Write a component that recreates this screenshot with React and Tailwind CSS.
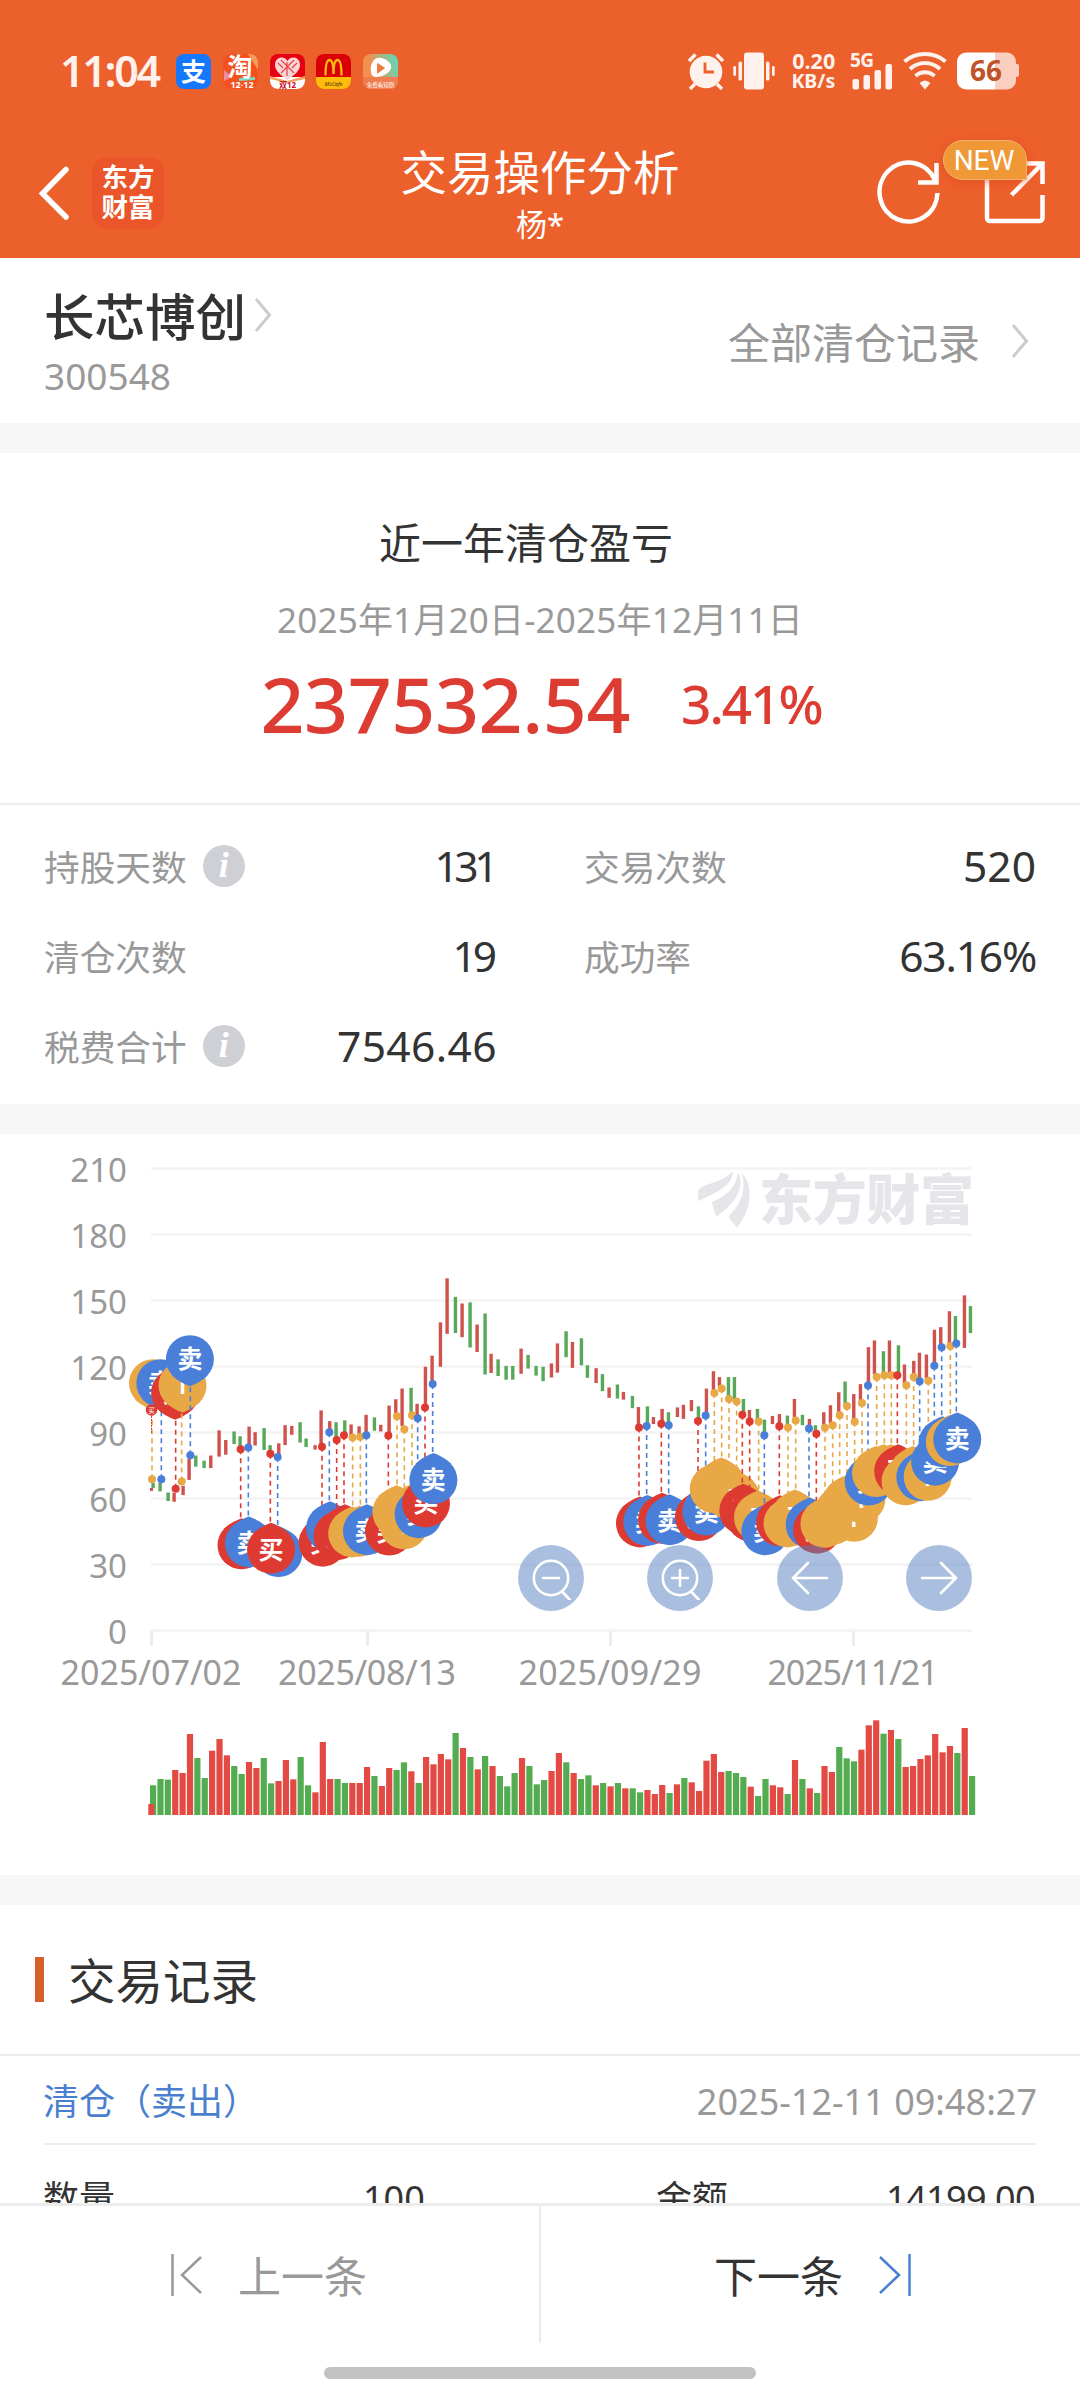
import { useMemo } from "react";

const RED = "#dd3a31";
const BLUE = "#4a7fd9";
const ORANGE = "#e8a845";
const MARK_COLORS = { b: RED, s: BLUE, t: ORANGE };
const MARK_LABELS = { b: "买", s: "卖", t: "T" };

// chart source units -> svg pixels
const toX = (value) => 40 + value / 3;
const toY = (value) => value / 2.7034 - 4;
const slotX = (index) => toX(339 + 22.135 * index);

// [center, color, high, low]
const prices = [
  [339, "g", 954, 968], [360, "g", 954, 977], [384, "g", 980, 1003], [402, "r", 981, 1005],
  [429, "r", 962, 987], [447, "r", 889, 946], [467, "g", 880, 910], [492, "g", 894, 914],
  [512, "r", 880, 914], [537, "r", 812, 883], [557, "r", 838, 878], [582, "g", 815, 849],
  [600, "g", 828, 860], [627, "r", 802, 855], [645, "r", 817, 853], [672, "g", 806, 865],
  [690, "g", 852, 875], [716, "r", 847, 880], [735, "r", 798, 852], [755, "r", 800, 824],
  [780, "g", 790, 845], [798, "g", 834, 857], [825, "r", 852, 864], [843, "r", 758, 852],
  [869, "r", 787, 812], [888, "g", 790, 832], [914, "g", 785, 820], [933, "r", 796, 828],
  [957, "r", 801, 826], [978, "r", 770, 822], [1003, "g", 777, 813], [1022, "r", 797, 815],
  [1047, "r", 745, 824], [1067, "r", 728, 770], [1086, "r", 699, 800], [1113, "g", 697, 765],
  [1131, "r", 740, 775], [1156, "r", 640, 748], [1176, "r", 610, 685], [1201, "r", 520, 640],
  [1221, "r", 401, 551], [1246, "g", 451, 549], [1266, "r", 469, 560], [1290, "g", 466, 588],
  [1311, "r", 526, 600], [1335, "g", 496, 661], [1353, "r", 605, 657], [1374, "g", 620, 665],
  [1398, "g", 638, 675], [1418, "g", 638, 675], [1443, "r", 591, 659], [1464, "g", 608, 645],
  [1488, "g", 638, 664], [1509, "g", 640, 679], [1534, "r", 631, 669], [1552, "r", 577, 656],
  [1578, "g", 544, 614], [1597, "r", 573, 643], [1624, "g", 563, 636], [1642, "g", 636, 670],
  [1668, "r", 644, 684], [1687, "g", 660, 706], [1707, "r", 696, 724], [1732, "g", 688, 726],
  [1750, "r", 708, 729], [1777, "g", 719, 752], [1795, "r", 749, 800], [1822, "g", 747, 795],
  [1840, "r", 776, 795], [1866, "r", 754, 790], [1885, "g", 763, 795], [1912, "r", 750, 776],
  [1930, "r", 743, 781], [1954, "r", 730, 760], [1975, "g", 747, 782], [1999, "r", 699, 768],
  [2020, "r", 652, 706], [2038, "r", 668, 692], [2065, "g", 668, 720], [2083, "g", 668, 728],
  [2110, "g", 727, 765], [2128, "r", 757, 783], [2152, "g", 754, 783], [2173, "g", 783, 818],
  [2197, "r", 773, 795], [2218, "r", 768, 797], [2242, "g", 772, 800], [2263, "r", 727, 778],
  [2287, "g", 770, 798], [2308, "r", 781, 800], [2326, "g", 798, 815], [2351, "r", 763, 800],
  [2371, "r", 744, 793], [2396, "r", 709, 765], [2415, "g", 680, 740], [2441, "r", 714, 783],
  [2461, "r", 687, 733], [2485, "r", 587, 683], [2503, "r", 569, 660], [2530, "g", 598, 657],
  [2548, "r", 569, 657], [2575, "g", 582, 657], [2593, "r", 634, 685], [2621, "r", 624, 662],
  [2638, "r", 602, 673], [2659, "r", 607, 672], [2683, "r", 540, 632], [2702, "r", 533, 580],
  [2728, "r", 490, 578], [2746, "g", 503, 570], [2773, "r", 447, 589], [2791, "g", 476, 549],
];

const volumes = [
  ["g", 286], ["g", 267], ["g", 269], ["r", 240], ["r", 249], ["r", 132], ["g", 204], ["g", 264],
  ["r", 182], ["r", 147], ["r", 196], ["g", 228], ["g", 252], ["r", 216], ["r", 234], ["g", 204],
  ["g", 280], ["r", 273], ["r", 210], ["r", 268], ["g", 201], ["g", 286], ["r", 307], ["r", 156],
  ["r", 267], ["g", 267], ["g", 279], ["r", 279], ["r", 279], ["r", 231], ["g", 258], ["r", 288],
  ["r", 234], ["g", 240], ["g", 217], ["r", 244], ["g", 279], ["r", 201], ["r", 223], ["r", 192],
  ["r", 208], ["g", 129], ["r", 174], ["g", 201], ["r", 238], ["g", 198], ["r", 228], ["g", 258],
  ["g", 289], ["g", 249], ["r", 204], ["g", 228], ["g", 283], ["g", 270], ["r", 243], ["r", 189],
  ["g", 217], ["r", 249], ["g", 267], ["g", 256], ["r", 286], ["g", 279], ["r", 289], ["g", 279],
  ["r", 295], ["g", 295], ["g", 307], ["r", 300], ["r", 312], ["r", 285], ["g", 309], ["r", 283],
  ["g", 264], ["r", 277], ["r", 303], ["r", 212], ["r", 192], ["r", 246], ["g", 243], ["g", 249],
  ["g", 261], ["r", 290], ["g", 318], ["g", 267], ["r", 286], ["r", 292], ["g", 312], ["r", 210],
  ["g", 267], ["r", 295], ["g", 309], ["r", 228], ["r", 246], ["g", 171], ["g", 205], ["g", 214],
  ["r", 179], ["r", 106], ["r", 91], ["g", 131], ["r", 120], ["g", 147], ["r", 231], ["r", 228],
  ["r", 207], ["r", 196], ["r", 132], ["r", 187], ["r", 168], ["g", 189], ["r", 114], ["g", 258],
];

// [x, y, kind], painted in this order
const trades = [
  [336, 944, "t"], [364, 944, "s"], [407, 970, "b"], [425, 950, "t"], [451, 879, "s"],
  [602, 863, "b"], [625, 858, "s"], [713, 884, "s"], [691, 875, "b"],
  [846, 856, "b"], [868, 817, "s"], [890, 838, "b"], [912, 825, "b"], [938, 831, "t"],
  [961, 829, "t"], [979, 825, "s"], [1045, 826, "b"], [1071, 774, "t"], [1093, 809, "t"],
  [1116, 771, "t"], [1133, 779, "s"], [1155, 750, "b"], [1178, 687, "s"],
  [1797, 804, "b"], [1820, 800, "s"], [1864, 794, "b"], [1886, 798, "s"], [1974, 787, "b"],
  [1997, 772, "s"], [2023, 711, "t"], [2045, 699, "t"], [2067, 727, "t"], [2090, 734, "t"],
  [2107, 770, "b"], [2129, 788, "b"], [2156, 788, "t"], [2173, 825, "s"], [2218, 801, "b"],
  [2244, 804, "t"], [2267, 785, "t"], [2307, 807, "s"], [2329, 821, "b"], [2355, 805, "t"],
  [2378, 798, "t"], [2399, 771, "t"], [2421, 746, "t"], [2444, 789, "t"], [2466, 738, "t"],
  [2484, 691, "s"], [2510, 668, "t"], [2533, 663, "t"], [2554, 663, "t"], [2572, 663, "b"],
  [2599, 690, "t"], [2621, 668, "t"], [2639, 679, "s"], [2665, 678, "t"], [2683, 637, "s"],
  [2705, 587, "s"], [2731, 584, "t"], [2749, 577, "s"],
];

const dateTicks = [
  { x: 151, label: "2025/07/02", width: 181 },
  { x: 367, label: "2025/08/13", width: 178 },
  { x: 610, label: "2025/09/29", width: 183 },
  { x: 853, label: "2025/11/21", width: 171 },
];

function TradePin({ trade }) {
  const [x, y, kind] = trade;
  const color = MARK_COLORS[kind];
  const dir = x < 460 ? -1 : 1;
  const cx = slotX(Math.round((x - 339) / 22.135));
  const dotX = toX(x);
  const dotY = toY(y);
  const tipY = dotY + dir * 69;
  const cy = tipY + dir * 27;
  const baseY = cy - dir * 16;
  const bendY = cy - dir * 23.5;

  return (
    <g>
      <circle cx={cx} cy={cy} r="24" fill={color} />
      <path
        d={`M${cx - 18} ${baseY}Q${cx - 10} ${bendY} ${cx} ${tipY}Q${cx + 10} ${bendY} ${cx + 18} ${baseY}z`}
        fill={color}
      />
      <text x={cx} y={cy + 9} fontSize="25" fontWeight="600" textAnchor="middle" fill="#fff">
        {MARK_LABELS[kind]}
      </text>
      <line x1={dotX} y1={dotY} x2={dotX} y2={tipY} stroke={color} strokeWidth="1.6" strokeDasharray="5 4" />
    </g>
  );
}

function Watermark() {
  return (
    <g fill="#e6e5ea">
      <path d="M698 58C700 49 722 50 733 37C733 49 722 57 698 67z" />
      <path d="M712 68C727 62 737 52 738 38C746 56 733 71 716 83C715 77 713 74 712 68z" />
      <path d="M742 39C753 52 753 73 737 94C734 89 729 86 729 82C742 69 746 56 742 39z" />
      <text x="759" y="86" fontSize="54" fontWeight="900" textLength="215">
        东方财富
      </text>
    </g>
  );
}

function ChartButton({ children, label }) {
  return (
    <button
      type="button"
      aria-label={label}
      className="flex h-[66px] w-[66px] items-center justify-center rounded-full bg-[#557fbf]/50"
    >
      <svg width="44" height="44" viewBox="0 0 44 44" fill="none" stroke="#fff" strokeWidth="2.6" strokeLinecap="round">
        {children}
      </svg>
    </button>
  );
}

function TradeChart() {
  const sortedDots = useMemo(() => [...trades].sort((a, b) => a[0] - b[0]), []);

  return (
    <section className="relative h-[741px] bg-white">
      <svg width="1080" height="741" viewBox="0 0 1080 741" className="block">
        {[210, 180, 150, 120, 90, 60, 30, 0].map((value, index) => (
          <g key={value}>
            <rect x="151" y={33 + index * 66} width="821" height="3" fill="#f5f5f5" />
            <text x="127" y={47.5 + index * 66} fontSize="33" textAnchor="end" fill="#999">
              {value}
            </text>
          </g>
        ))}
        {dateTicks.map((tick) => (
          <g key={tick.label}>
            <rect x={tick.x - 1} y="497" width="3" height="15" fill="#ececec" />
            <text x={tick.x} y="551" fontSize="34" textLength={tick.width} textAnchor="middle" fill="#999">
              {tick.label}
            </text>
          </g>
        ))}
        <Watermark />

        {prices.map(([x, color, high, low]) => (
          <rect
            key={x}
            x={toX(x) - 1.6}
            y={toY(high)}
            width="3.4"
            height={toY(low) - toY(high)}
            fill={color === "r" ? "#d0524c" : "#58a85a"}
          />
        ))}
        <rect x="150" y="354" width="3" height="3" fill="#d0524c" />

        {trades.map((trade) => (
          <TradePin key={trade[0]} trade={trade} />
        ))}
        {sortedDots.map(([x, y, kind]) => (
          <circle key={x} cx={toX(x)} cy={toY(y)} r="4" fill={MARK_COLORS[kind]} />
        ))}
        <line x1="151.5" y1="282" x2="151.5" y2="300" stroke={RED} strokeDasharray="2 1" />
        <circle cx="151.5" cy="276" r="5.8" fill={RED} />
        <text x="151.5" y="278.5" fontSize="6.5" textAnchor="middle" fill="#fff">
          买
        </text>

        {volumes.map(([color, level], index) => (
          <rect
            key={index}
            x={slotX(index) - 3}
            y={681 - (375 - level) / 3}
            width="6.2"
            height={(375 - level) / 3}
            fill={color === "r" ? "#e34a43" : "#54ac51"}
          />
        ))}
        <rect x="148.3" y="670" width="6" height="11" fill="#e34a43" />
      </svg>

      <div className="absolute top-[411px] left-[518px] flex w-[454px] justify-between">
        <ChartButton label="缩小">
          <circle cx="22" cy="22" r="17.2" />
          <path d="M14 22h16M33.5 36l7.5 8" />
        </ChartButton>
        <ChartButton label="放大">
          <circle cx="22" cy="22" r="17.2" />
          <path d="M14 22h16M22 14v16M33.5 36l7.5 8" />
        </ChartButton>
        <ChartButton label="向左">
          <path d="M39 22H5M20 7L5 22l15 15" />
        </ChartButton>
        <ChartButton label="向右">
          <path d="M5 22h34M24 7l15 15-15 15" />
        </ChartButton>
      </div>
    </section>
  );
}

function AppIcons() {
  return (
    <div className="ml-[16px] flex gap-[11.8px]">
      <svg width="35" height="35" viewBox="0 0 35 35" className="overflow-visible">
        <rect width="35" height="35" rx="8" fill="#1677ff" />
        <text x="17.5" y="26.5" fontSize="25" fontWeight="700" textAnchor="middle" fill="#fff">支</text>
      </svg>
      <svg width="35" height="35" viewBox="0 0 35 35" className="overflow-visible">
        <rect width="35" height="35" rx="8" fill="#f4511e" />
        <path d="M25 0h2a8 8 0 018 8v8z" fill="#f79a5b" />
        <path d="M1 16l8 7-8 4z" fill="#f58ba0" />
        <path d="M16 24l16-1v3l-16 1z" fill="#7fd8c4" />
        <text x="17" y="22" fontSize="25" fontWeight="700" textAnchor="middle" fill="#fff">淘</text>
        <text x="19" y="34" fontSize="9" fontWeight="700" textAnchor="middle" fill="#fff">12·12</text>
      </svg>
      <svg width="35" height="35" viewBox="0 0 35 35" className="overflow-visible">
        <rect width="35" height="35" rx="8" fill="#e60012" />
        <path d="M0 23h35v4a8 8 0 01-8 8H8a8 8 0 01-8-8z" fill="#fff" />
        <path d="M0 22l17 5 18-5v3l-18 4L0 25z" fill="#f5a05a" />
        <path d="M17.5 26C9 20 5 16 5 11C5 3 14 1 17.5 7C21 1 30 3 30 11C30 16 26 20 17.5 26z" fill="#fbd5d3" />
        <path d="M8 9l5 5M27 9l-5 5M11 6l13 13M24 6L11 19M17 8v14" stroke="#e2444a" strokeWidth="1.2" />
        <text x="17.5" y="33.5" fontSize="8" fontWeight="700" textAnchor="middle" fill="#c8102e">双12</text>
      </svg>
      <svg width="35" height="35" viewBox="0 0 35 35" className="overflow-visible">
        <rect width="35" height="35" rx="8" fill="#db0007" />
        <path d="M0 23h35v4a8 8 0 01-8 8H8a8 8 0 01-8-8z" fill="#ffbc0d" />
        <path
          d="M9.5 21.5C9.5 12 10.5 6 13.5 6S17.5 12 17.5 20C17.5 12 18.5 6 21.5 6S25.5 12 25.5 21.5"
          fill="none"
          stroke="#ffbc0d"
          strokeWidth="2.3"
        />
        <text x="17.5" y="31.5" fontSize="5.5" fontStyle="italic" textAnchor="middle" fill="#4a2b12">McCafe</text>
      </svg>
      <svg width="35" height="35" viewBox="0 0 35 35" className="overflow-visible">
        <defs>
          <linearGradient id="player" x1="0" y1="0.3" x2="1" y2="0">
            <stop offset="0.2" stopColor="#f2914f" />
            <stop offset="1" stopColor="#4fe0c4" />
          </linearGradient>
        </defs>
        <rect width="35" height="35" rx="8" fill="url(#player)" />
        <path d="M0 23h35v4a8 8 0 01-8 8H8a8 8 0 01-8-8z" fill="#ef7d4f" />
        <path d="M12 5C18 1 30 8 28 14.500C26 21 12 26 9 21C7 17 7 9 12 5z" fill="#fff" />
        <path d="M14.500 9.500l7 4.500-7 5z" fill="#ee7a3e" stroke="#ee7a3e" strokeLinejoin="round" />
        <text x="17.5" y="33" fontSize="5.5" textAnchor="middle" fill="#fff">免费看短剧</text>
      </svg>
    </div>
  );
}

function StatusBar() {
  return (
    <div className="flex h-[142px] items-center pl-[60px]">
      <span className="w-[100px] pb-[2px] text-[43px] leading-none font-semibold tracking-[-2.3px] whitespace-nowrap text-[#fff1ec]">
        11:04
      </span>
      <AppIcons />
      <svg width="38" height="38" viewBox="0 0 38 38" className="ml-[289px]" stroke="#fff1ec" fill="none">
        <circle cx="19" cy="20" r="16.3" fill="#fff1ec" stroke="none" />
        <path d="M2 9l6.5-6.5M36 9l-6.5-6.5" strokeWidth="3.5" />
        <path d="M3 37l5-5M35 37l-5-5" strokeWidth="3.5" />
        <path d="M18 10.500V20h9" strokeWidth="2.8" stroke="#ec602c" />
      </svg>
      <svg width="42" height="38" viewBox="0 0 42 38" className="ml-[8px]" fill="#fff1ec">
        <rect x="11" y="0.5" width="20" height="37" rx="3" />
        <rect x="5.5" y="9.5" width="3.5" height="19" rx="1.5" />
        <rect x="33" y="9.5" width="3.5" height="19" rx="1.5" />
        <rect x="0.3" y="14" width="2.7" height="10" rx="1.2" />
        <rect x="39" y="14" width="2.7" height="10" rx="1.2" />
      </svg>
      <div className="ml-[12px] w-[48px] text-right text-[21.5px] leading-[20px] font-bold text-[#fff1ec]">
        <p>0.20</p>
        <p className="text-[19.5px]">KB/s</p>
      </div>
      <svg width="43" height="38" viewBox="0 0 43 38" className="ml-[15px] overflow-visible" fill="#fff1ec">
        <text x="0" y="14.5" fontSize="19" fontWeight="700" textLength="24">5G</text>
        <rect x="2.5" y="27" width="6.5" height="10.5" rx="2" />
        <rect x="13.5" y="23" width="6.5" height="14.5" rx="2" />
        <rect x="24.5" y="18" width="6.5" height="19.5" rx="2" />
        <rect x="35.5" y="12" width="6.5" height="25.5" rx="2" />
      </svg>
      <svg width="44" height="38" viewBox="0 0 44 38" className="ml-[10px]" fill="none" stroke="#fff1ec" strokeWidth="4">
        <path d="M1.5 9.5C13-0.5 31-0.5 42.5 9.5" />
        <path d="M7 17C16 9 28 9 37 17" />
        <path d="M12.5 24C18 19 26 19 31.5 24" />
        <path d="M16.5 31Q22 26 27.5 31L22 37.5z" fill="#fff1ec" stroke="none" />
      </svg>
      <svg width="64" height="38" viewBox="0 0 64 38" className="ml-[9px]">
        <path d="M39 0.5H51a9 9 0 019 9V12h1a2 2 0 012 2v9a2 2 0 01-2 2h-1v3.5a9 9 0 01-9 9H39z" fill="#f9cfc0" />
        <path d="M39 0.5H10a9 9 0 00-9 9v19a9 9 0 009 9H39z" fill="#fff" />
        <text x="30" y="29" fontSize="28" fontWeight="700" textLength="32" textAnchor="middle" fill="#c05228">66</text>
      </svg>
    </div>
  );
}

function NavBar() {
  return (
    <div className="relative flex h-[116px] items-start justify-between pr-[34px] pl-[38px]">
      <div className="flex items-center pt-[15px]">
        <svg width="34" height="56" viewBox="0 0 34 56" fill="none" stroke="#fff" strokeWidth="5.5" strokeLinecap="round">
          <path d="M28 4.5L4.5 28.5L28 52" />
        </svg>
        <div className="ml-[20px] flex h-[72px] w-[72px] flex-col items-center justify-center rounded-[15px] bg-[#ea5529] pb-[2px] text-[26.5px] leading-[30px] font-bold text-white">
          <span>东方</span>
          <span>财富</span>
        </div>
      </div>
      <div className="absolute inset-x-0 top-[-2px] text-center text-white">
        <h1 className="text-[46.5px] leading-[64px]">交易操作分析</h1>
        <p className="mt-[5px] text-[31px] leading-[30px]">杨*</p>
      </div>
      <div className="flex gap-[43px] pt-[16px]">
        <svg width="64" height="68" viewBox="0 0 64 68" fill="none" stroke="#fff" strokeWidth="4.5">
          <path d="M60.5 35A29 29.5 0 1 1 58 22" />
          <path d="M59.5 5V24.5H41" />
        </svg>
        <div className="relative">
          <svg width="62" height="68" viewBox="0 0 62 68" fill="none" stroke="#fff" strokeWidth="4.5">
            <path d="M3 6V60a3 3 0 003 3H55.500a3 3 0 003-3V37" />
            <path d="M24 5.500H58.500V26M58 6L27.500 37" />
          </svg>
          <span className="absolute top-[-18px] left-[-41px] h-[40px] w-[84px] rounded-[20px] rounded-br-none border border-[#f3b56e] bg-[#f09736] pr-[2px] text-center font-[Roboto,sans-serif] text-[28px] leading-[39px] text-white shadow-[0_2px_8px_rgba(225,70,30,0.6)]">
            NEW
          </span>
        </div>
      </div>
    </div>
  );
}

function Chevron() {
  return (
    <svg width="18" height="36" viewBox="0 0 18 36" fill="none" stroke="#ccc" strokeWidth="3">
      <path d="M2 2L15.500 18L2 34" />
    </svg>
  );
}

function InfoIcon() {
  return (
    <span className="mb-[5px] ml-[16px] flex h-[42px] w-[42px] items-center justify-center rounded-full bg-[#cfd0d5] pb-[2px] font-['Liberation_Serif',serif] text-[36px] leading-none font-bold text-white italic">
      i
    </span>
  );
}

function Stat({ label, value, info, className, valueClass = "" }) {
  return (
    <div className={`flex h-[90px] items-center ${className}`}>
      <span className="text-[35.7px] text-[#999]">{label}</span>
      {info && <InfoIcon />}
      <span className={`mb-[3px] ml-auto text-[42.5px] text-[#333] ${valueClass}`}>{value}</span>
    </div>
  );
}

function App() {
  return (
    <div className="flex h-[2400px] w-[1080px] flex-col overflow-hidden bg-white font-['Noto_Sans','Noto_Sans_CJK_SC',sans-serif] leading-none text-[#333]">
      <header className="h-[258px] shrink-0 bg-[#ec602c]">
        <StatusBar />
        <NavBar />
      </header>

      <main className="h-[1945px] shrink-0 overflow-hidden">
        <section className="flex h-[165px] justify-between pr-[51px] pl-[44px]">
          <div>
            <div className="flex h-[64px] items-center gap-[8px] pt-[53px]">
              <h2 className="text-[50.5px] leading-[64px] font-medium">长芯博创</h2>
              <span className="mb-[4px]">
                <Chevron />
              </span>
            </div>
            <p className="mt-[35px] text-[37px] text-[#999]">300548</p>
          </div>
          <div className="flex h-[166px] items-center gap-[31px] text-[42px] text-[#999]">
            <span className="pt-[3px]">全部清仓记录</span>
            <Chevron />
          </div>
        </section>

        <section className="h-[380px] border-t-[30px] border-[#f7f7f7] text-center">
          <h3 className="pt-[69px] pr-[28px] text-[42px]">近一年清仓盈亏</h3>
          <p className="mt-[38px] text-[35px] tracking-[0.2px] text-[#999]">2025年1月20日-2025年12月11日</p>
          <div className="mt-[28px] flex items-center justify-center gap-[51px] pl-[2px] text-[#dd3c33]">
            <span className="text-[77px] font-medium tracking-[-0.4px]">237532.54</span>
            <span className="text-[53px] font-medium tracking-[-2px]">3.41%</span>
          </div>
        </section>

        <section className="grid h-[301px] grid-cols-2 content-start border-t-2 border-[#eee] pt-[18px]">
          <Stat label="持股天数" value="131" info className="pr-[43px] pl-[44px]" valueClass="tracking-[-4.5px] pr-[3px]" />
          <Stat label="交易次数" value="520" className="pr-[44px] pl-[44px]" />
          <Stat label="清仓次数" value="19" className="pr-[43px] pl-[44px]" valueClass="tracking-[-4px] pr-[4px]" />
          <Stat label="成功率" value="63.16%" className="pr-[44px] pl-[44px]" valueClass="tracking-[-1.2px]" />
          <Stat label="税费合计" value="7546.46" info className="pr-[43px] pl-[44px]" valueClass="tracking-[0.4px]" />
        </section>
        <div className="h-[30px] bg-[#f7f7f7]" />

        <TradeChart />
        <div className="h-[30px] bg-[#f7f7f7]" />

        <section>
          <div className="flex h-[149px] items-center gap-[24px] pl-[35px]">
            <span className="h-[45px] w-[9px] bg-[#d5602b]" />
            <h3 className="pt-[3px] text-[47.5px]">交易记录</h3>
          </div>
          <div className="border-t-2 border-[#ececec] px-[43px]">
            <div className="flex h-[89px] items-center justify-between border-b-2 border-[#eee] pt-[4px] text-[36px]">
              <span className="text-[#4a7fcf]">清仓（卖出）</span>
              <span className="text-[#999]">2025-12-11 09:48:27</span>
            </div>
            <div className="flex pt-[36px] pr-[2px] text-[36px]">
              <span className="w-[320px]">数量</span>
              <span>100</span>
              <span className="ml-auto w-[379px]">金额</span>
              <span className="-ml-[180px] w-[180px] text-right tracking-[-0.6px]">14199.00</span>
            </div>
          </div>
        </section>
      </main>

      <footer className="flex grow flex-col items-center border-t-[3px] border-[#ececec]">
        <div className="flex h-[137px] w-full text-[43px]">
          <button type="button" className="flex w-[541px] items-center gap-[34px] border-r-2 border-[#ececec] pl-[170px] text-[#999]">
            <svg width="34" height="44" viewBox="0 0 34 44" fill="none" stroke="#999" strokeWidth="2.5">
              <path d="M2.500 1V43M31 4L12 22L31 40" />
            </svg>
            <span className="pt-[3px]">上一条</span>
          </button>
          <button type="button" className="flex grow items-center gap-[35px] pl-[173px]">
            <span className="pt-[3px]">下一条</span>
            <svg width="34" height="44" viewBox="0 0 34 44" fill="none" stroke="#4a80d4" strokeWidth="2.5">
              <path d="M31.500 1V43M2 4L21 22L2 40" />
            </svg>
          </button>
        </div>
        <div className="mt-[24px] h-[12px] w-[432px] rounded-full bg-[#c2c2c2]" />
      </footer>
    </div>
  );
}

export default App;
